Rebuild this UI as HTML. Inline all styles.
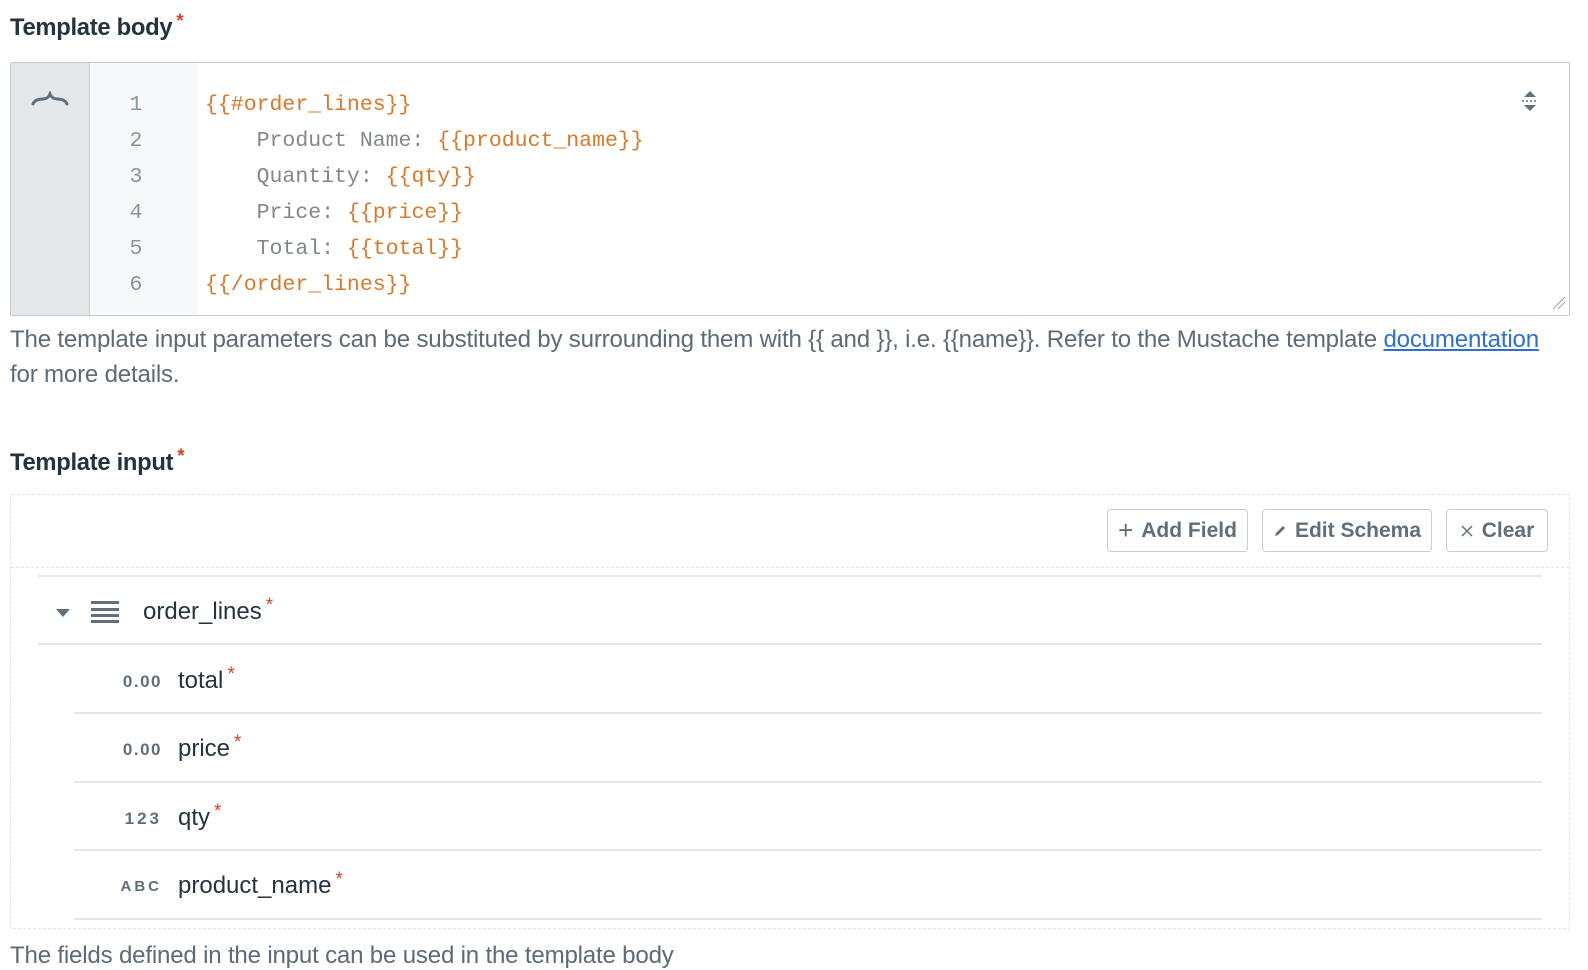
<!DOCTYPE html>
<html><head><meta charset="utf-8"><style>
*{box-sizing:border-box;margin:0;padding:0}
body{width:1588px;height:970px;background:#fff;font-family:"Liberation Sans",sans-serif;color:#23343f;position:relative;overflow:hidden}
.abs{position:absolute}
.h{font-weight:bold;font-size:23.8px;color:#23343f;letter-spacing:-0.3px}
.req{color:#d0452a;font-size:19px;vertical-align:top;position:relative;top:-3px;margin-left:4px}
.code{left:10px;top:62px;width:1560px;height:254px;border:1px solid #c3c9ce;border-radius:2px;background:#fff;overflow:hidden}
.gut{left:0;top:0;width:79px;height:100%;background:#e5e8eb;border-right:1px solid #c8ced3}
.nums{left:80px;top:0;width:106px;height:100%;background:#f7f8fa}
.ln{font-family:"Liberation Mono",monospace;font-size:21.5px;position:absolute;white-space:pre;line-height:36px}
.num{color:#8a949c;width:90px;text-align:center;left:80px}
.o{color:#d9782a}.g{color:#80878d}
.para{font-size:24.1px;color:#5c6b77;white-space:nowrap;letter-spacing:-0.2px}
.para a{color:#2f6fd1;text-decoration:underline}
.box{left:10px;top:494px;width:1560px;height:435px;border:1px dashed #dfe3e6;border-radius:2px}
.btn{top:509px;height:43px;border:1px solid #c6ccd1;border-radius:4px;font-size:21px;font-weight:bold;color:#5f6f7b;display:flex;align-items:center;justify-content:center;gap:8px;background:#fff}
.line{height:2px;background:#e3e7ea}
.fname{font-size:24px;color:#23343f}
.type{font-size:17px;font-weight:bold;color:#5f6f7b;width:80px;text-align:right;left:82px;letter-spacing:1.5px}
</style></head><body>
<div class="abs h" style="left:10px;top:14px">Template body<span class="req">*</span></div>

<div class="abs code">
 <div class="abs gut"></div>
 <div class="abs nums"></div>
 <svg class="abs" style="left:20px;top:28px" width="40" height="18" viewBox="0 0 40 18"><path d="M2 13 Q4 8 12 8 Q17 8 19 3 Q21 8 26 8 Q34 8 36 13" fill="none" stroke="#5f6f7b" stroke-width="3" stroke-linecap="round"/></svg>
 <svg class="abs" style="left:1509px;top:26px" width="20" height="24" viewBox="0 0 20 24"><path d="M4 8 L10 2 L16 8Z M4 16 L10 22 L16 16Z" fill="#5f6f7b"/><path d="M2 12 H18" stroke="#5f6f7b" stroke-width="1.5" stroke-dasharray="2 2"/></svg>
 <svg class="abs" style="left:1540px;top:232px" width="16" height="16"><path d="M2 14 L14 2 M7 14 L14 7" stroke="#9aa3aa" stroke-width="1"/></svg>
</div>
<div class="abs" style="left:11px;top:65px;">
 <div class="ln num" style="top:22px">1</div>
 <div class="ln num" style="top:58px">2</div>
 <div class="ln num" style="top:94px">3</div>
 <div class="ln num" style="top:130px">4</div>
 <div class="ln num" style="top:166px">5</div>
 <div class="ln num" style="top:202px">6</div>
 <div class="ln" style="left:194px;top:22px"><span class="o">{{#order_lines}}</span></div>
 <div class="ln" style="left:194px;top:58px"><span class="g">    Product Name: </span><span class="o">{{product_name}}</span></div>
 <div class="ln" style="left:194px;top:94px"><span class="g">    Quantity: </span><span class="o">{{qty}}</span></div>
 <div class="ln" style="left:194px;top:130px"><span class="g">    Price: </span><span class="o">{{price}}</span></div>
 <div class="ln" style="left:194px;top:166px"><span class="g">    Total: </span><span class="o">{{total}}</span></div>
 <div class="ln" style="left:194px;top:202px"><span class="o">{{/order_lines}}</span></div>
</div>

<div class="abs para" style="left:10px;top:326px">The template input parameters can be substituted by surrounding them with {{ and }}, i.e. {{name}}. Refer to the Mustache template <a>documentation</a></div>
<div class="abs para" style="left:10px;top:361px">for more details.</div>

<div class="abs h" style="left:10px;top:449px">Template input<span class="req">*</span></div>

<div class="abs box"></div>
<div class="abs" style="left:11px;top:567px;width:1558px;border-top:1px dashed #dfe3e6"></div>
<div class="abs btn" style="left:1107px;width:141px"><span style="font-weight:normal;font-size:26px">+</span>Add Field</div>
<div class="abs btn" style="left:1262px;width:170px"><svg width="14" height="14" viewBox="0 0 14 14"><path d="M2 12 L3 9 L10 2 L12 4 L5 11Z" fill="#5f6f7b"/></svg>Edit Schema</div>
<div class="abs btn" style="left:1446px;width:102px"><svg width="14" height="14"><path d="M2 2 L12 12 M12 2 L2 12" stroke="#5f6f7b" stroke-width="1.5"/></svg>Clear</div>

<div class="abs line" style="left:38px;top:575px;width:1504px"></div>
<svg class="abs" style="left:55px;top:608px" width="16" height="10"><path d="M1 1 H15 L8 9Z" fill="#5f6f7b"/></svg>
<svg class="abs" style="left:91px;top:600px" width="28" height="24"><g fill="#5f6f7b"><rect x="0" y="1" width="28" height="3"/><rect x="0" y="8" width="28" height="3"/><rect x="0" y="14" width="28" height="3"/><rect x="0" y="20" width="28" height="3"/></g></svg>
<div class="abs fname" style="left:143px;top:598px">order_lines<span class="req">*</span></div>
<div class="abs line" style="left:38px;top:643px;width:1504px"></div>

<div class="abs type" style="top:672px">0.00</div>
<div class="abs fname" style="left:178px;top:667px">total<span class="req">*</span></div>
<div class="abs line" style="left:74px;top:712px;width:1468px"></div>

<div class="abs type" style="top:740px">0.00</div>
<div class="abs fname" style="left:178px;top:735px">price<span class="req">*</span></div>
<div class="abs line" style="left:74px;top:781px;width:1468px"></div>

<div class="abs type" style="top:809px;letter-spacing:3px">123</div>
<div class="abs fname" style="left:178px;top:804px">qty<span class="req">*</span></div>
<div class="abs line" style="left:74px;top:849px;width:1468px"></div>

<div class="abs type" style="top:878px;font-size:15px;letter-spacing:3px">ABC</div>
<div class="abs fname" style="left:178px;top:872px">product_name<span class="req">*</span></div>
<div class="abs line" style="left:74px;top:918px;width:1468px"></div>

<div class="abs para" style="left:10px;top:942px">The fields defined in the input can be used in the template body</div>
</body></html>
